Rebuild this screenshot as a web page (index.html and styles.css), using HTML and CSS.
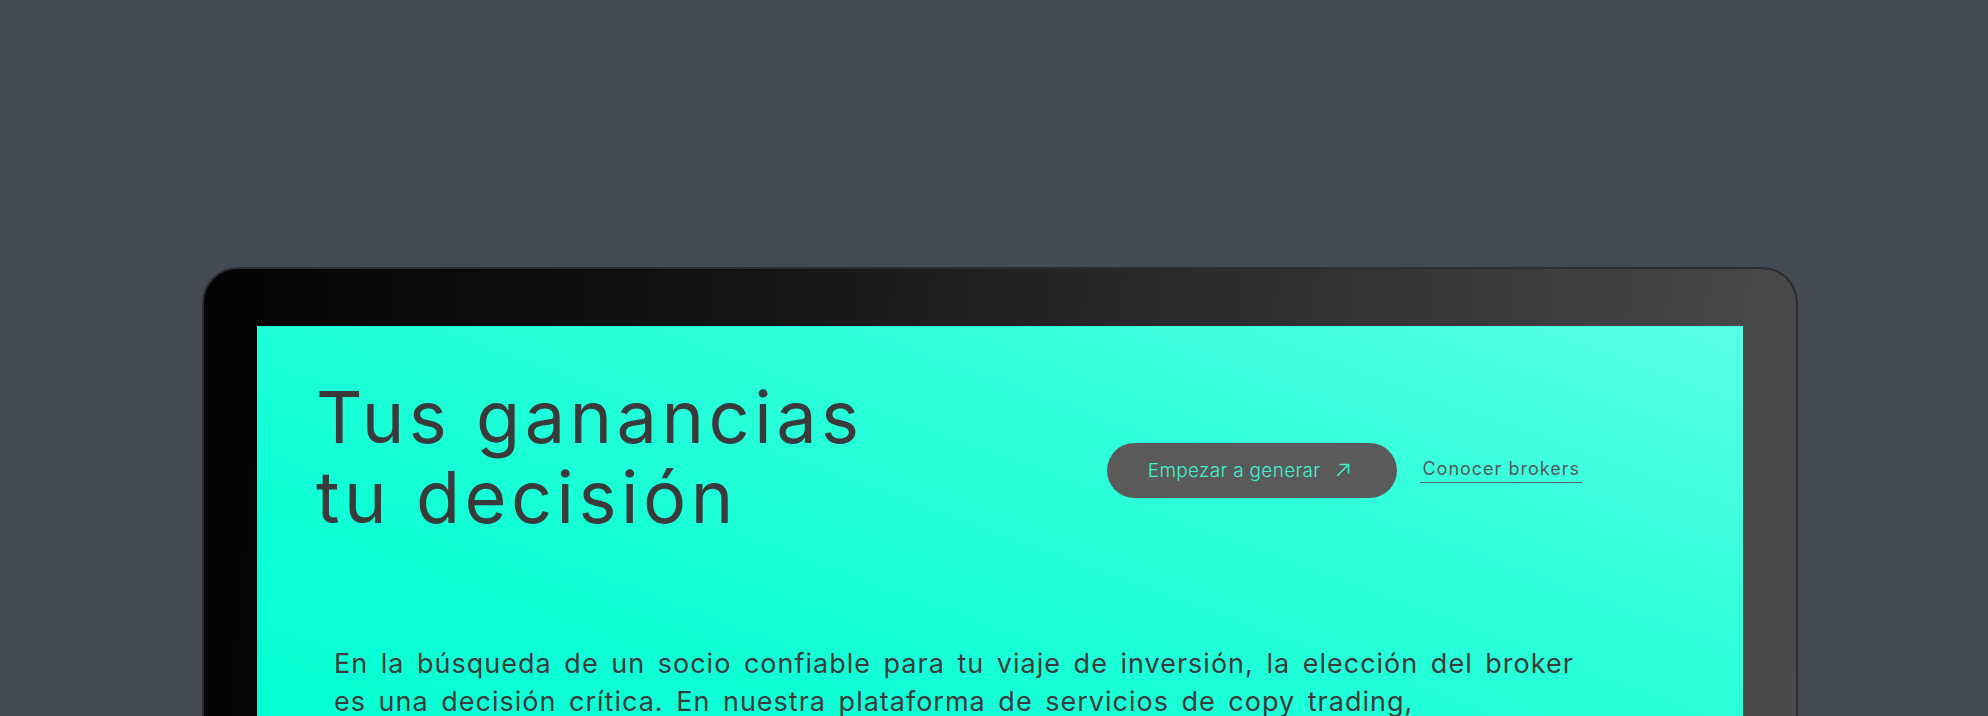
FILE: index.html
```html
<!DOCTYPE html>
<html lang="es">
<head>
<meta charset="utf-8">
<title>Tus ganancias tu decisión</title>
<link rel="stylesheet" href="styles.css">
</head>
<body>
<div class="stage">
  <div class="monitor">
    <div class="screen">
      <div class="hero">
        <h1 class="title">Tus ganancias<br>tu decisión</h1>
        <div class="actions">
          <a class="btn" href="#">Empezar a generar
            <svg class="btn-icon" width="14" height="14" viewBox="0 0 14 14" fill="none" stroke="currentColor" stroke-width="1.6" stroke-linecap="round" stroke-linejoin="round"><path d="M1.5 12.5 L12.5 1.5"/><path d="M4 1.5 H12.5 V10"/></svg>
          </a>
          <a class="link" href="#">Conocer brokers</a>
        </div>
      </div>
      <p class="lead">En la búsqueda de un socio confiable para tu viaje de inversión, la elección del broker<br>es una decisión crítica. En nuestra plataforma de servicios de copy trading,</p>
    </div>
  </div>
</div>
</body>
</html>
```
FILE: styles.css
```css
* { box-sizing: border-box; }
html, body { margin: 0; padding: 0; }
body {
  background: #434a53;
  height: 716px;
  overflow: hidden;
  font-family: "Inter", "Noto Sans", sans-serif;
}
.stage {
  padding: 267px 0 0 202px;
}
.monitor {
  width: 1596px;
  height: 600px;
  border-radius: 36px 36px 0 0;
  border: 2px solid #2a2e33;
  border-bottom: none;
  background: linear-gradient(95deg, #030303 0%, #151515 35%, #333333 70%, #4c4c4c 100%);
  padding: 57px 53px 0 53px;
}
.screen {
  height: 100%;
  background: linear-gradient(20deg, #00ffd2 0%, #0effd6 35%, #30ffdc 70%, #58ffe3 100%);
  padding: 51px 161px 0 59px;
}
.hero {
  display: flex;
  align-items: center;
  justify-content: space-between;
}
.title {
  margin: 0;
  font-size: 72px;
  line-height: 80px;
  font-weight: 400;
  color: #3a3a3a;
  letter-spacing: 4.5px;
}
.actions {
  display: flex;
  align-items: center;
  gap: 23px;
  margin-top: 26px;
}
.btn {
  display: flex;
  align-items: center;
  gap: 16px;
  height: 55px;
  padding: 0 47px 0 41px;
  border-radius: 28px;
  background: #5a5a5a;
  color: #3ff3cf;
  text-decoration: none;
  font-size: 19px;
  font-weight: 300;
  letter-spacing: 0.3px;
}
.btn-icon { display: block; }
.link {
  color: #535b59;
  font-size: 18px;
  font-weight: 400;
  letter-spacing: 1px;
  text-decoration: none;
  border-bottom: 1.5px solid #5b6966;
  padding: 0 2px 3px;
}
.lead {
  margin: 108px 0 0 18px;
  font-size: 27px;
  line-height: 38px;
  font-weight: 400;
  color: #3b3b3b;
  letter-spacing: 1px;
  word-spacing: 4px;
  white-space: nowrap;
}
```
